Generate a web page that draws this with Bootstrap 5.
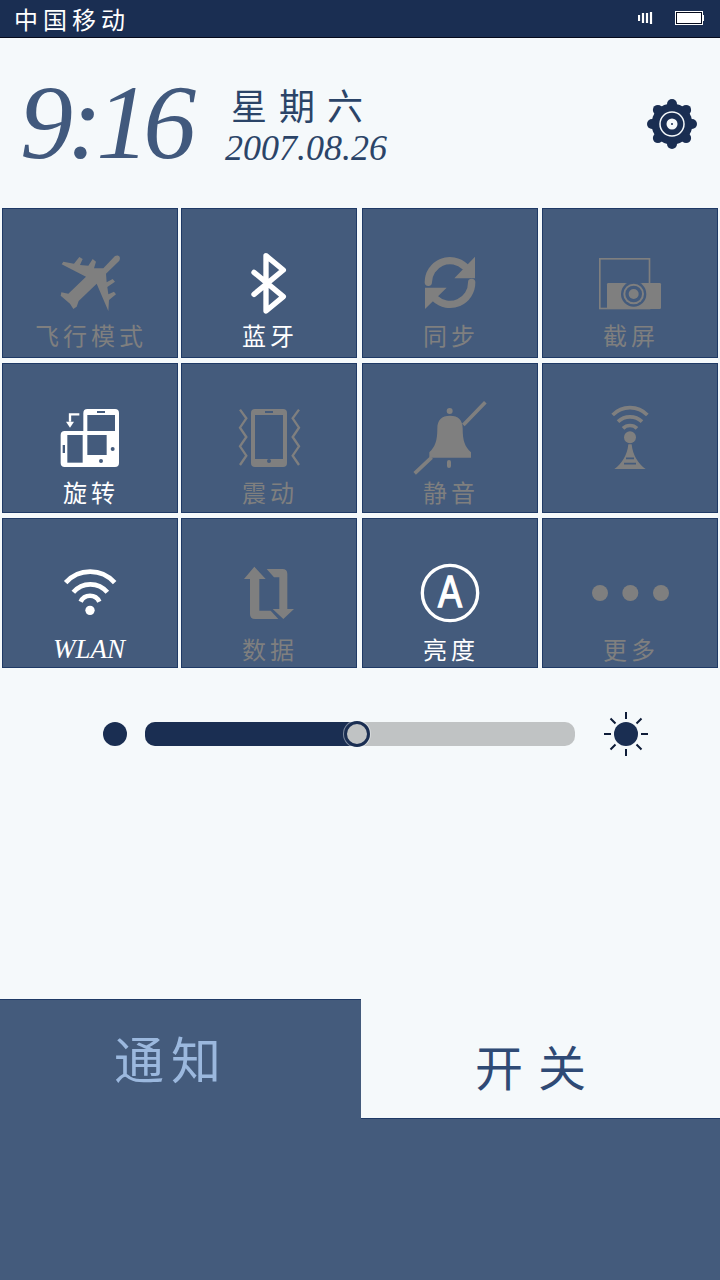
<!DOCTYPE html>
<html lang="zh-CN">
<head>
    <meta charset="UTF-8">
    <meta name="viewport" content="width=device-width, initial-scale=1.0">
    <title>通知中心</title>
    <link rel="stylesheet" href="https://cdn.jsdelivr.net/npm/bootstrap@5.3.2/dist/css/bootstrap.min.css">
    <style>
        body {
            background-color: #f5f9fb;
            font-family: "Noto Sans CJK SC", "Liberation Sans", sans-serif;
        }
        .phone-screen { width: 720px; height: 1280px; overflow: hidden; }
        .status-strip {
            height: 38px;
            background: #1a2e52;
            border-bottom: 1px solid #050a1c;
            color: #fff;
            padding: 0 16px 0 14px;
        }
        .carrier-name { font-size: 24px; letter-spacing: 5px; line-height: 36px; }
        .status-icons { gap: 22px; margin-top: -1px; }
        .clock-head { height: 170px; padding-left: 20px; padding-right: 23px; }
        .big-time {
            font-family: "Liberation Serif", serif;
            font-style: italic;
            font-size: 106px;
            letter-spacing: -6px;
            line-height: 1;
            color: #41597d;
            width: 205px;
        }
        .week-day { font-size: 36px; letter-spacing: 12px; line-height: 40px; color: #2b4468; padding-left: 6px; }
        .date-text {
            font-family: "Liberation Serif", serif;
            font-style: italic;
            font-size: 36px;
            line-height: 38px;
            color: #2b4468;
            margin-top: 5px;
        }
        .clock-text { margin-top: 5px; }
        .gear-icon { margin-top: 2px; }
        .tile-grid {
            display: grid;
            grid-template-columns: 179px 181px 180px 176px;
            grid-auto-rows: 150px;
            row-gap: 5px;
            padding-left: 2px;
        }
        .tile-box {
            width: 176px;
            height: 150px;
            background: #445b7c;
            border: 1px solid #1f3a66;
            padding-top: 34px;
        }
        .tile-box svg { display: block; }
        .tile-name { font-size: 24px; letter-spacing: 4px; text-indent: 4px; line-height: 24px; color: #fff; margin-left: -2px; }
        .tile-name.is-off { color: #7f7f7f; }
        .mid-row .tile-name { margin-top: 2px; }
        .low-row .tile-name { margin-top: 4px; }
        .tile-name.wlan-name {
            font-family: "Liberation Serif", serif;
            font-style: italic;
            font-size: 27px;
            letter-spacing: 0;
            text-indent: 0;
        }
        .tile-off { fill: #7f7f7f; }
        .tile-on { fill: #fff; }
        .bright-row { height: 132px; padding-left: 103px; }
        .bright-dot { width: 24px; height: 24px; border-radius: 50%; background: #1a2e52; }
        .bright-track {
            position: relative;
            width: 430px;
            height: 24px;
            margin: 0 28px 0 18px;
            border-radius: 10px;
            background: #c0c3c4;
        }
        .bright-fill { height: 24px; border-radius: 10px 0 0 10px; background: #1a2e52; }
        .bright-thumb {
            position: absolute;
            top: -1px;
            left: 199px;
            width: 26px;
            height: 26px;
            border-radius: 50%;
            background: #c0c3c4;
            border: 3px solid #1a2e52;
            box-shadow: 0 0 0 1px rgba(245, 249, 251, 0.45);
        }
        .tab-row { height: 120px; margin-top: 199px; }
        .tab-left {
            width: 361px;
            background: #445b7c;
            border-top: 1px solid #1f3a66;
            color: #9bb8de;
            font-size: 50px;
            letter-spacing: 7px;
            padding: 0 19px 4px 0;
        }
        .tab-right {
            width: 359px;
            border-bottom: 1px solid #1f3a66;
            color: #2f4a75;
            font-size: 48px;
            letter-spacing: 15px;
            padding: 12px 5px 0 0;
        }
        .foot-fill { background: #445b7c; }
    </style>
</head>
<body>

    <div class="phone-screen d-flex flex-column">
        <div class="status-strip d-flex align-items-center justify-content-between flex-shrink-0">
            <span class="carrier-name">中国移动</span>
            <div class="status-icons d-flex align-items-center">
                <svg width="15" height="14" viewBox="0 0 15 14">
                    <path d="M1 4v6M5 2v10M9 2v10M13 1v12" stroke="#fff" stroke-width="2.200" fill="none"/>
                </svg>
                <svg width="29" height="14" viewBox="0 0 29 14">
                    <rect x="0.500" y="0.500" width="27" height="13" fill="#050a1c" stroke="#fff"/>
                    <rect x="2" y="2" width="24" height="10" fill="#fff"/>
                    <rect x="28" y="4" width="1" height="6" fill="#fff"/>
                </svg>
            </div>
        </div>

        <div class="clock-head d-flex align-items-center flex-shrink-0">
            <div class="big-time">9:16</div>
            <div class="clock-text flex-grow-1 text-nowrap">
                <div class="week-day">星期六</div>
                <div class="date-text">2007.08.26</div>
            </div>
            <svg class="gear-icon" width="50" height="50" viewBox="0 0 50 50">
                <g fill="#1a2e52">
                    <circle cx="25" cy="25" r="20.500"/>
                    <circle cx="25" cy="5" r="5"/>
                    <circle cx="25" cy="45" r="5"/>
                    <circle cx="5" cy="25" r="5"/>
                    <circle cx="45" cy="25" r="5"/>
                    <circle cx="10.900" cy="10.900" r="5"/>
                    <circle cx="39.100" cy="10.900" r="5"/>
                    <circle cx="10.900" cy="39.100" r="5"/>
                    <circle cx="39.100" cy="39.100" r="5"/>
                </g>
                <circle cx="25" cy="25" r="12" fill="none" stroke="#f5f9fb" stroke-width="1.500"/>
                <circle cx="25" cy="25" r="5.500" fill="#f5f9fb"/>
                <circle cx="25" cy="25" r="1" fill="#1a2e52"/>
            </svg>
        </div>

        <div class="tile-grid flex-shrink-0">
            <!-- row 1 -->
            <div class="tile-box d-flex flex-column align-items-center">
                <svg width="80" height="80" viewBox="150 114 240 240">
                    <path class="tile-off" d="M345 153C355 148 364 155 358 167L318 206L320 232L338 222L345 230L322 246L325 268L342 260L348 268L327 285L325 318L290 236L236 288L230 305L220 312L210 296L182 272L184 262L205 266L258 215L185 178L190 170L222 176L238 156L248 162L240 180L265 182L278 162L288 170L282 190L310 190Z"/>
                </svg>
                <div class="tile-name is-off">飞行模式</div>
            </div>
            <div class="tile-box d-flex flex-column align-items-center">
                <svg width="80" height="80" viewBox="687 114 240 240">
                    <path d="M762 202L850 275L798 318V152L850 195L762 268" fill="none" stroke="#fff" stroke-width="16" stroke-linejoin="round" stroke-linecap="round"/>
                </svg>
                <div class="tile-name">蓝牙</div>
            </div>
            <div class="tile-box d-flex flex-column align-items-center">
                <svg width="80" height="80" viewBox="150 114 240 240">
                    <path d="M205 232A65 65 0 0 1 315 185M335 232A65 65 0 0 1 225 280" fill="none" stroke="#7f7f7f" stroke-width="22" stroke-linecap="round"/>
                    <path class="tile-off" d="M345 155V220H283ZM195 248H260L195 312Z"/>
                </svg>
                <div class="tile-name is-off">同步</div>
            </div>
            <div class="tile-box d-flex flex-column align-items-center">
                <svg width="80" height="80" viewBox="690 114 240 240">
                    <rect x="719.500" y="161.500" width="149" height="149" fill="none" stroke="#7f7f7f" stroke-width="5"/>
                    <rect class="tile-off" x="741" y="234" width="162" height="78" rx="4"/>
                    <circle cx="821" cy="267" r="38" fill="#445b7c"/>
                    <circle cx="821" cy="267" r="31" class="tile-off"/>
                    <circle cx="821" cy="267" r="25" fill="#445b7c"/>
                    <circle cx="821" cy="267" r="15" class="tile-off"/>
                </svg>
                <div class="tile-name is-off">截屏</div>
            </div>

            <!-- row 2 -->
            <div class="tile-box mid-row d-flex flex-column align-items-center">
                <svg width="80" height="80" viewBox="150 579 240 240">
                    <path class="tile-on" d="M262 612H345Q357 612 357 624V774Q357 786 345 786H194Q182 786 182 774V690Q182 678 194 678H250V624Q250 612 262 612Z"/>
                    <g fill="#445b7c">
                        <rect x="262" y="630" width="83" height="48"/>
                        <rect x="262" y="690" width="58" height="60"/>
                        <rect x="202" y="690" width="46" height="83"/>
                        <rect x="291" y="618" width="24" height="6"/>
                        <rect x="188" y="720" width="7" height="24"/>
                        <circle cx="338" cy="732" r="6"/>
                        <circle cx="303" cy="768" r="6"/>
                    </g>
                    <path d="M238 628H210V650" fill="none" stroke="#fff" stroke-width="7"/>
                    <path class="tile-on" d="M198 650H222L210 668Z"/>
                </svg>
                <div class="tile-name">旋转</div>
            </div>
            <div class="tile-box mid-row d-flex flex-column align-items-center">
                <svg width="80" height="80" viewBox="687 579 240 240">
                    <rect class="tile-off" x="753" y="612" width="108" height="174" rx="12"/>
                    <g fill="#445b7c">
                        <rect x="765" y="630" width="84" height="132"/>
                        <rect x="795" y="618" width="24" height="6"/>
                        <circle cx="807" cy="768" r="6"/>
                    </g>
                    <path d="M720 614L739 640L720 668L739 696L720 724L739 752L720 780M897 614L878 640L897 668L878 696L897 724L878 752L897 780" fill="none" stroke="#7f7f7f" stroke-width="7"/>
                </svg>
                <div class="tile-name is-off">震动</div>
            </div>
            <div class="tile-box mid-row d-flex flex-column align-items-center">
                <svg width="80" height="80" viewBox="150 579 240 240">
                    <path d="M376 592L310 660M215 757L164 805" stroke="#7f7f7f" stroke-width="11" fill="none"/>
                    <circle class="tile-off" cx="269" cy="618" r="9"/>
                    <path class="tile-off" d="M270 632C245 632 232 645 232 670C232 710 225 725 208 742V758H333V742C315 725 308 710 308 670C308 645 295 632 270 632Z"/>
                    <rect class="tile-off" x="261" y="765" width="12" height="24" rx="6"/>
                </svg>
                <div class="tile-name is-off">静音</div>
            </div>
            <div class="tile-box mid-row d-flex flex-column align-items-center">
                <svg width="80" height="80" viewBox="690 579 240 240">
                    <path d="M758 630A72 72 0 0 1 862 630M774 650A52 52 0 0 1 846 650M789 670A30 30 0 0 1 831 670" fill="none" stroke="#7f7f7f" stroke-width="11"/>
                    <circle class="tile-off" cx="810" cy="697" r="18"/>
                    <path class="tile-off" d="M805 718H815C818 750 835 778 857 792H763C785 778 802 750 805 718Z"/>
                    <path d="M798 760H822M792 776H828" stroke="#445b7c" stroke-width="5"/>
                </svg>
            </div>

            <!-- row 3 -->
            <div class="tile-box low-row d-flex flex-column align-items-center">
                <svg width="80" height="80" viewBox="148 114 240 240">
                    <path d="M195 203A98 98 0 0 1 342 203M218 232A66 66 0 0 1 320 232M240 260A31 31 0 0 1 296 260" fill="none" stroke="#fff" stroke-width="14"/>
                    <circle class="tile-on" cx="268" cy="286" r="14"/>
                </svg>
                <div class="tile-name wlan-name">WLAN</div>
            </div>
            <div class="tile-box low-row d-flex flex-column align-items-center">
                <svg width="80" height="80" viewBox="687 114 240 240">
                    <path class="tile-off" d="M763 155L797 192H778V287H812L835 312H765Q750 312 750 297V192H732Z"/>
                    <path class="tile-off" d="M850 312L882 282H862V177Q862 162 847 162H800L822 187H838V282H818Z"/>
                </svg>
                <div class="tile-name is-off">数据</div>
            </div>
            <div class="tile-box low-row d-flex flex-column align-items-center">
                <svg width="80" height="80" viewBox="150 114 240 240">
                    <circle cx="270" cy="234" r="83" fill="none" stroke="#fff" stroke-width="10"/>
                    <text x="270" y="276" text-anchor="middle" font-family="Liberation Sans" font-size="131" fill="#fff" stroke="#fff" stroke-width="4" textLength="72" lengthAdjust="spacingAndGlyphs">A</text>
                </svg>
                <div class="tile-name">亮度</div>
            </div>
            <div class="tile-box low-row d-flex flex-column align-items-center">
                <svg width="80" height="80" viewBox="690 114 240 240">
                    <circle class="tile-off" cx="720" cy="234" r="24"/>
                    <circle class="tile-off" cx="811" cy="234" r="24"/>
                    <circle class="tile-off" cx="903" cy="234" r="24"/>
                </svg>
                <div class="tile-name is-off">更多</div>
            </div>
        </div>

        <div class="bright-row d-flex align-items-center flex-shrink-0">
            <div class="bright-dot"></div>
            <div class="bright-track">
                <div class="bright-fill" style="width: 49%"></div>
                <div class="bright-thumb"></div>
            </div>
            <svg width="46" height="46" viewBox="0 0 46 46">
                <circle cx="23" cy="23" r="12" fill="#1a2e52"/>
                <path d="M23 1V8M23 38V45M1 23H8M38 23H45M7.500 7.500L12.500 12.500M33.500 33.500L38.500 38.500M7.500 38.500L12.500 33.500M33.500 12.500L38.500 7.500" stroke="#0e1c38" stroke-width="2" fill="none"/>
            </svg>
        </div>

        <div class="tab-row d-flex flex-shrink-0">
            <div class="tab-left d-flex align-items-center justify-content-center">通知</div>
            <div class="tab-right d-flex align-items-center justify-content-center">开关</div>
        </div>
        <div class="foot-fill flex-grow-1"></div>
    </div>

    <script src="https://cdn.jsdelivr.net/npm/bootstrap@5.3.2/dist/js/bootstrap.bundle.min.js"></script>
</body>
</html>
